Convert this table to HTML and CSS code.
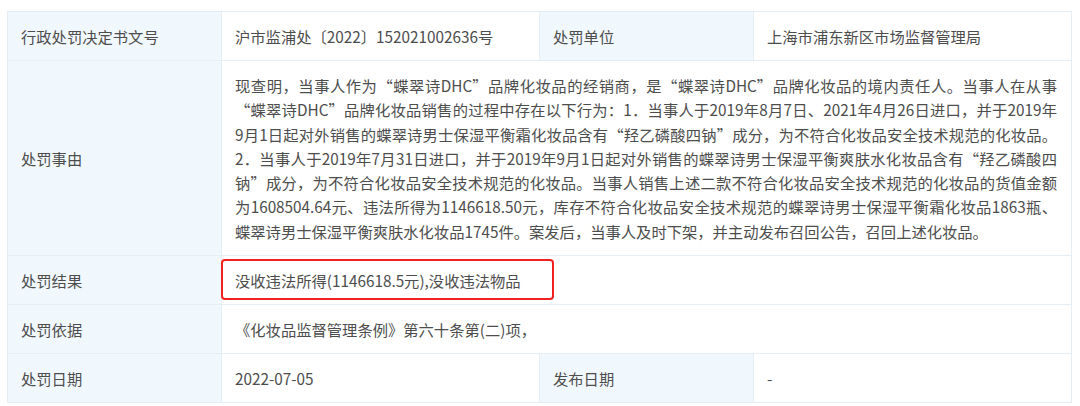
FILE: index.html
```html
<!DOCTYPE html>
<html lang="zh-CN">

<head>
  <meta charset="UTF-8">
  <meta name="viewport" content="width=device-width, initial-scale=1.0">
  <title>行政处罚信息</title>
  <link rel="stylesheet" href="styles.css">
</head>

<body>
  <table class="info">
    <colgroup>
      <col class="c-label">
      <col class="c-value">
      <col class="c-label">
      <col class="c-value">
    </colgroup>
    <tr>
      <th>行政处罚决定书文号</th>
      <td>沪市监浦处〔2022〕152021002636号</td>
      <th>处罚单位</th>
      <td>上海市浦东新区市场监督管理局</td>
    </tr>
    <tr>
      <th>处罚事由</th>
      <td colspan="3" class="long">
        <span class="ln">现查明，当事人作为“蝶翠诗DHC”品牌化妆品的经销商，是“蝶翠诗DHC”品牌化妆品的境内责任人。当事人在从事</span>
        <span class="ln">“蝶翠诗DHC”品牌化妆品销售的过程中存在以下行为：1．当事人于2019年8月7日、2021年4月26日进口，并于2019年</span>
        <span class="ln">9月1日起对外销售的蝶翠诗男士保湿平衡霜化妆品含有“羟乙磷酸四钠”成分，为不符合化妆品安全技术规范的化妆品。</span>
        <span class="ln">2．当事人于2019年7月31日进口，并于2019年9月1日起对外销售的蝶翠诗男士保湿平衡爽肤水化妆品含有“羟乙磷酸四</span>
        <span class="ln">钠”成分，为不符合化妆品安全技术规范的化妆品。当事人销售上述二款不符合化妆品安全技术规范的化妆品的货值金额</span>
        <span class="ln">为1608504.64元、违法所得为1146618.50元，库存不符合化妆品安全技术规范的蝶翠诗男士保湿平衡霜化妆品1863瓶、</span>
        <span class="ln last">蝶翠诗男士保湿平衡爽肤水化妆品1745件。案发后，当事人及时下架，并主动发布召回公告，召回上述化妆品。</span>
      </td>
    </tr>
    <tr>
      <th>处罚结果</th>
      <td colspan="3"><span class="mark">没收违法所得(1146618.5元),没收违法物品</span></td>
    </tr>
    <tr>
      <th>处罚依据</th>
      <td colspan="3">《化妆品监督管理条例》第六十条第(二)项，</td>
    </tr>
    <tr>
      <th>处罚日期</th>
      <td>2022-07-05</td>
      <th>发布日期</th>
      <td>-</td>
    </tr>
  </table>
</body>

</html>
```

FILE: styles.css
```css
* {
  margin: 0;
  padding: 0;
}

body {
  padding: 11px 8px 0 7px;
  background-color: #fff;
  font-family: "Noto Sans CJK SC", sans-serif;
  font-size: 15.3px;
  color: #4d4d4d;
}

.info {
  width: 1065px;
  border-collapse: collapse;
  table-layout: fixed;
}

.c-label {
  width: 214px;
}

.c-value {
  width: 318px;
}

.info th,
.info td {
  padding: 12px 12px 12px 13px;
  border: 1px solid #e6eef5;
  line-height: 24px;
  text-align: left;
  font-weight: normal;
  vertical-align: middle;
}

.info th {
  background-color: #f1f8fd;
}

.info td {
  background-color: #fff;
}

.info .long {
  padding-right: 14px;
  line-height: 24.3px;
}

/* 每行两端对齐，最后一行左对齐 */
.ln {
  display: block;
  text-align: justify;
  text-align-last: justify;
}

.ln.last {
  text-align-last: left;
}

.mark {
  position: relative;
}

/* 红色标注框 */
.mark::before {
  content: "";
  position: absolute;
  left: -14px;
  top: -10px;
  width: 329px;
  height: 37px;
  border: 2px solid #f0211f;
  border-radius: 4px;
}
```
